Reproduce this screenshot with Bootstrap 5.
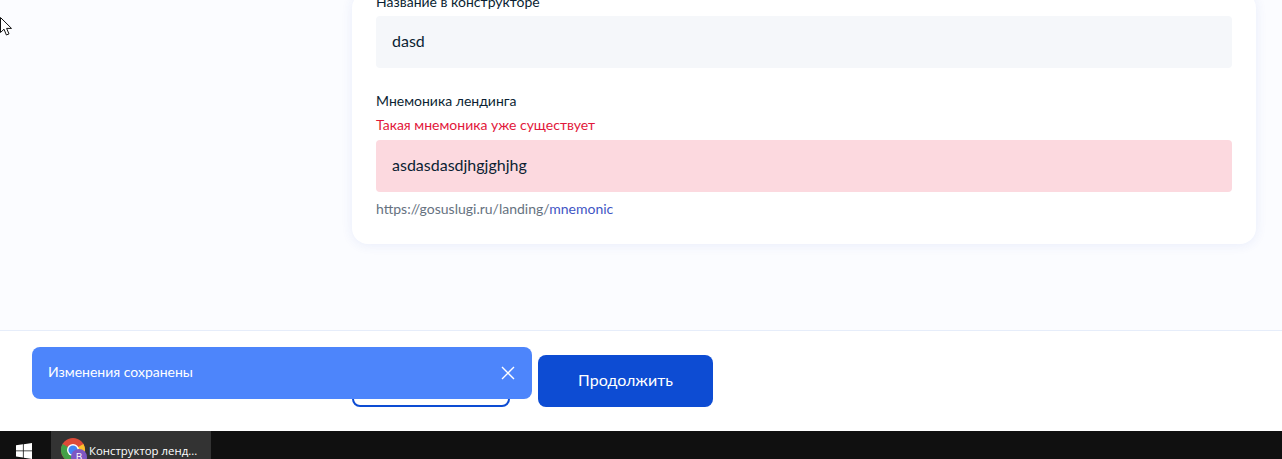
<!DOCTYPE html>
<html lang="ru">
<head>
<meta charset="utf-8">
<title>Конструктор лендингов</title>
<link href="https://cdn.jsdelivr.net/npm/bootstrap@5.3.0/dist/css/bootstrap.min.css" rel="stylesheet">
<style>
html,body{height:459px;overflow:hidden;margin:0;background:#fff}
body{font-family:Lato,"Liberation Sans",sans-serif;color:#0b1f33;font-size:14px;line-height:20px}
.shell{height:459px;overflow:hidden;position:relative}
.work{height:330px;background:#fbfcff;overflow:hidden;padding:0 26px 86px 352px}
.sheet{background:#fff;border-radius:16px;box-shadow:0 1px 12px rgba(40,80,200,.09);padding:0 24px 25px;flex-shrink:0}
.cap{margin:0 0 4px;height:20px;color:#0b1f33}
.cap-second{margin-bottom:5px}
.cap-err{color:#e2173b;height:18px;margin:2px 0 6px;line-height:18px}
.fieldbox{height:52px;border-radius:4px;background:#f5f7fa;padding:0 16px;font-size:16px;line-height:50px;color:#0b1f33}
.fieldbox-bad{background:#fcd9df}
.hint{color:#66727f;margin-top:7px;height:20px}
.hint span{color:#3f55c4}
.gap-field{height:23px}
.bottom{height:101px;background:#fff;border-top:1px solid #e6edfa;padding:24px 0 0 352px;gap:28px}
.bt{height:52px;border-radius:8px;font-size:16px;font-family:inherit;padding:0 0 2px}
.bt-back{width:158px;border:2px solid #0d4cd3;color:#0d4cd3;background:#fff}
.bt-next{width:175px;border:0;background:#0d4cd3;color:#fff}
.notice{position:absolute;left:32px;top:347px;width:500px;height:52px;background:#4d85fb;color:#fff;border-radius:8px;padding:0 16px}
.notice svg{display:block}
.notice-text{margin-bottom:2px}
.notice-x{background:none;border:0;padding:0;line-height:0}
.taskbar{height:40px;background:#101010;color:#fff;flex-shrink:0}
.winbtn{width:48px;padding-left:16px}
.task{width:160px;height:40px;margin-left:3px;background:#333;padding-left:10px;gap:2px;font-family:"Open Sans","Noto Sans",sans-serif;font-size:11.4px;white-space:nowrap}
.pointer{position:absolute;left:0;top:17px}
</style>
</head>
<body>
<div class="shell">
  <main class="work d-flex flex-column justify-content-end">
    <section class="sheet">
      <p class="cap">Название в конструкторе</p>
      <div class="fieldbox">dasd</div>
      <div class="gap-field"></div>
      <p class="cap cap-second">Мнемоника лендинга</p>
      <p class="cap-err">Такая мнемоника уже существует</p>
      <div class="fieldbox fieldbox-bad">asdasdasdjhgjghjhg</div>
      <div class="hint">https://gosuslugi.ru/landing/<span>mnemonic</span></div>
    </section>
  </main>
  <footer class="bottom d-flex align-items-start">
    <button class="bt bt-back" type="button">Назад</button>
    <button class="bt bt-next" type="button">Продолжить</button>
  </footer>
  <div class="notice d-flex align-items-center justify-content-between">
    <span class="notice-text">Изменения сохранены</span>
    <button class="notice-x" type="button" aria-label="Закрыть">
      <svg width="16" height="16" viewBox="0 0 16 16"><path d="M2 2 14 14M14 2 2 14" stroke="#fff" stroke-width="1.4" fill="none"/></svg>
    </button>
  </div>
  <div class="taskbar d-flex align-items-center">
    <div class="winbtn">
      <svg width="16" height="16" viewBox="0 0 16 16" class="d-block"><path fill="#fff" d="M0 2.3 6.9 1.3V7.5H0ZM7.7 1.2 16 0V7.5H7.7ZM0 8.3H6.9V14.6L0 13.6ZM7.7 8.3H16V16L7.7 14.8Z"/></svg>
    </div>
    <div class="task d-flex align-items-center">
      <svg width="26" height="27" viewBox="0 0 26 27" class="flex-shrink-0">
        <circle cx="12" cy="12" r="12" fill="#dd4b39"/>
        <path d="M12 12 22.4 6A12 12 0 0 1 12 24Z" fill="#fbc02d"/>
        <path d="M12 12 12 24A12 12 0 0 1 1.6 6Z" fill="#43a047"/>
        <circle cx="12" cy="12" r="6" fill="#fff"/>
        <circle cx="12" cy="12" r="4.6" fill="#4285f4"/>
        <circle cx="18" cy="19" r="8" fill="#7e57c2"/>
        <text x="18" y="23" font-size="10" fill="#fff" text-anchor="middle" font-family="Open Sans">В</text>
      </svg>
      <span>Конструктор ленд...</span>
    </div>
  </div>
  <svg class="pointer" width="13" height="20" viewBox="0 0 13 20"><path d="M.5.5V15.5L4 12.2 6.4 18l2.6-1.1L6.6 11.4H11.5Z" fill="#fff" stroke="#111" stroke-width="1"/></svg>
</div>
<script src="https://cdn.jsdelivr.net/npm/bootstrap@5.3.0/dist/js/bootstrap.bundle.min.js"></script>
</body>
</html>
